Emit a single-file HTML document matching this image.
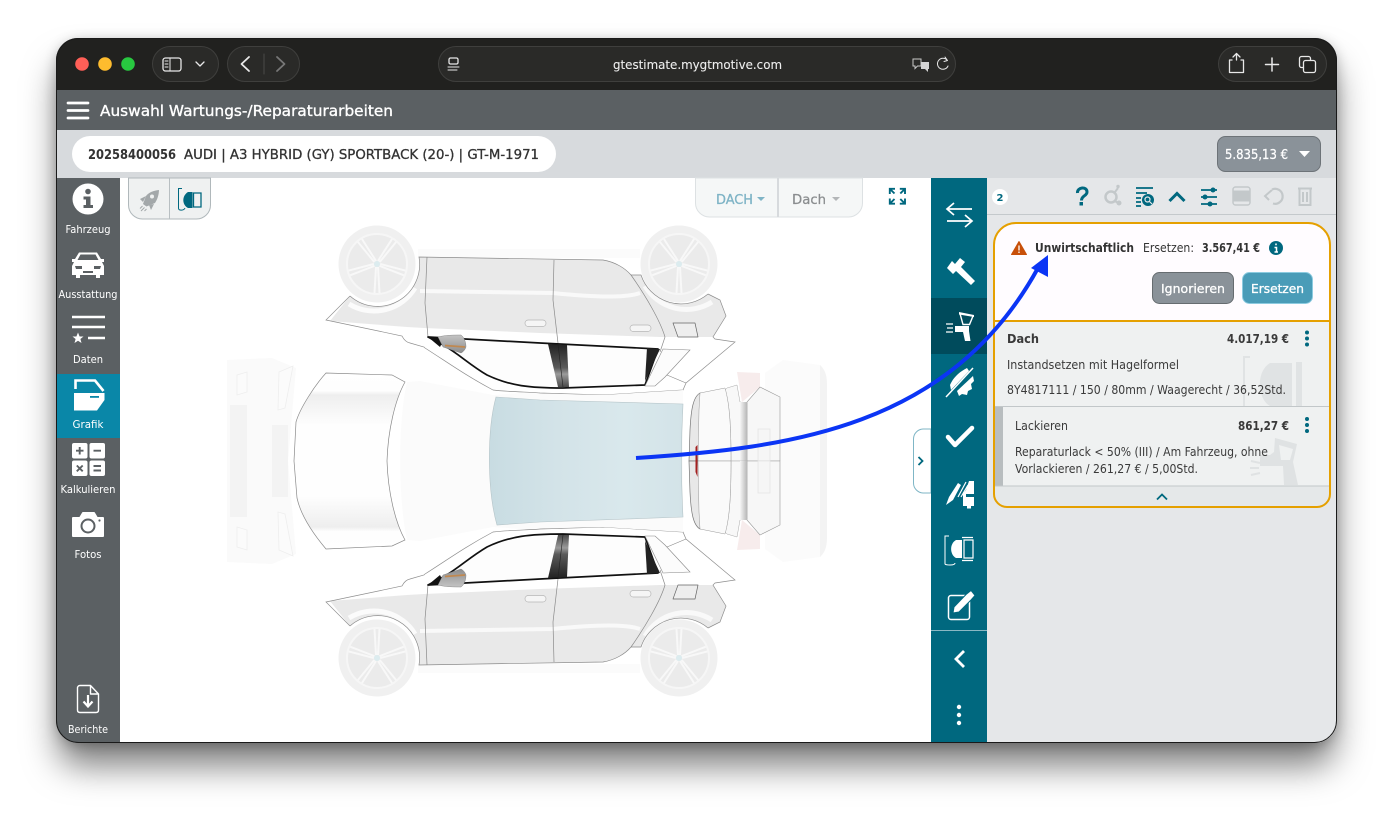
<!DOCTYPE html>
<html lang="de"><head><meta charset="utf-8"><title>Auswahl Wartungs-/Reparaturarbeiten</title>
<style>
html,body{margin:0;padding:0;width:1393px;height:817px;overflow:hidden;background:#fff}
#sh{position:absolute;left:58px;top:40px;width:1277px;height:702px;border-radius:22px;box-shadow:0 24px 34px rgba(0,0,0,.5),0 2px 14px rgba(0,0,0,.3)}
svg{position:absolute;left:0;top:0;display:block}
text{font-family:"DejaVu Sans","Liberation Sans",sans-serif}
</style></head><body>
<div id="sh"></div>
<svg width="1393" height="817" viewBox="0 0 1393 817" xmlns="http://www.w3.org/2000/svg">
<defs>
<clipPath id="win"><rect x="56" y="38" width="1281" height="705" rx="22"/></clipPath>
<linearGradient id="glass" x1="0" x2="1" y1="0" y2="0"><stop offset="0" stop-color="#c8dce2"/><stop offset=".35" stop-color="#d3e3e8"/><stop offset=".7" stop-color="#d9e8ec"/><stop offset="1" stop-color="#d3e3e8"/></linearGradient>
<linearGradient id="hoodT" x1="0" x2="0" y1="0" y2="1"><stop offset="0" stop-color="#fff"/><stop offset=".1" stop-color="#fefefe"/><stop offset=".125" stop-color="#eeeeee"/><stop offset=".3" stop-color="#fefefe"/><stop offset=".7" stop-color="#fefefe"/><stop offset=".875" stop-color="#eeeeee"/><stop offset=".9" stop-color="#fefefe"/><stop offset="1" stop-color="#fff"/></linearGradient>
<linearGradient id="pil" x1="0" x2="0" y1="0" y2="1"><stop offset="0" stop-color="#222"/><stop offset=".55" stop-color="#5a5a5a"/><stop offset=".7" stop-color="#9a9a9a"/><stop offset="1" stop-color="#4a4a4a"/></linearGradient>
<linearGradient id="mir" x1="0" x2="0" y1="0" y2="1"><stop offset="0" stop-color="#c4c4c4"/><stop offset="1" stop-color="#8c8c8c"/></linearGradient>
<linearGradient id="ctr" x1="0" x2="1" y1="0" y2="0"><stop offset="0" stop-color="#f6f6f6"/><stop offset="1" stop-color="#b8b8b8"/></linearGradient>
<g id="wheel">
<circle r="38.500" fill="#f0f0f0"/><circle r="30" fill="#ebebeb" stroke="#f6f6f6" stroke-width="2"/>
<g id="spk" fill="none" stroke="#f8f8f8" stroke-width="2"><path d="M-1,3L-2.500,29M1,3L2.500,29"/></g>
<use href="#spk" transform="rotate(72)"/><use href="#spk" transform="rotate(144)"/><use href="#spk" transform="rotate(216)"/><use href="#spk" transform="rotate(288)"/>
<circle r="3" fill="#dcecef"/>
</g>
<g id="side">
<rect x="418" y="249" width="222" height="9" fill="#fbfbfb"/>
<path d="M350,296A42,42 0 0 0 419,257L603,260C615,262 625,268 631,275L641,275A42,42 0 0 0 708,294L720,300L726,316L713,337L660,337L540,333L424,328L407,327L330,321Z" fill="#e9e9e9"/>
<path d="M349,304A48,48 0 0 0 415,288" fill="none" stroke="#fbfbfb" stroke-width="5"/>
<path d="M645,286A48,48 0 0 0 712,302" fill="none" stroke="#f9f9f9" stroke-width="5"/>
<path d="M420,291L553,293Q620,300 640,293" fill="none" stroke="#f9f9f9" stroke-width="4"/>
<path d="M350,296L326,320L402,336Q405,342 410,343L424,347L425,348C450,364 465,375 493,390C510,392 530,392 540,393L603,395L683,390L686,383L735,342L715,339L713,337L726,316L720,300L708,294" fill="none" stroke="#8e8e8e" stroke-width=".7"/>
<path d="M350,296A42,42 0 0 0 419,257L603,260C615,262 625,268 631,275C645,295 660,320 665,337L660,352" fill="none" stroke="#8a8a8a" stroke-width=".7"/>
<path d="M631,275H641A42,42 0 0 0 708,294" fill="none" stroke="#8a8a8a" stroke-width=".7"/>
<path d="M427,257L425,303L428,337M554,260L553,300L558,343" fill="none" stroke="#8a8a8a" stroke-width=".7"/>
<path d="M428,337L540,343L658,349L645,385L563,388C530,388 510,386 487,375C470,365 460,355 445,346Z" fill="#fdfdfd" stroke="#111" stroke-width="1.700" stroke-linejoin="round"/>
<path d="M428,337H445L440,347Z" fill="#111"/>
<path d="M548,344L558,387H569L567,345Z" fill="url(#pil)"/><path d="M558,344L563,387" stroke="#222" stroke-width=".6"/>
<path d="M647,348L660,349L645,381Z" fill="#222"/>
<path d="M663,349L690,350L665,377L655,386L645,386Z" fill="#fcfcfc" stroke="#888" stroke-width=".6"/>
<path d="M667,375L686,383" stroke="#888" stroke-width=".6"/>
<path d="M673,323H695L698,337H678Z" fill="#eee" stroke="#666" stroke-width=".7" stroke-linejoin="round"/>
<path d="M438,337C445,335 455,335 461,335C464,337 466,342 466,347C465,350 463,352 461,353L443,347Z" fill="url(#mir)" stroke="#777" stroke-width=".4"/>
<path d="M445,345.500L465,347" stroke="#c08850" stroke-width="1.700"/>
<rect x="525" y="320" width="21" height="6.500" rx="3.200" fill="#f5f5f5" stroke="#b5b5b5" stroke-width=".7"/>
<rect x="630" y="325" width="21" height="6.500" rx="3.200" fill="#f5f5f5" stroke="#b5b5b5" stroke-width=".7"/>
</g>
<g id="halfC">
<path d="M227,360L272,358L296,368L288,461H227Z" fill="#fafafa"/>
<path d="M230,405H247V461H230ZM272,425H288V461H272Z" fill="#f3f3f3"/>
<path d="M237,375L247,372V392L237,395ZM279,372L293,366L285,408L278,410Z" fill="#fbfbfb" stroke="#eee" stroke-width=".8"/>
<path d="M783,360L820,365C825,370 827,375 827,385V461H765V373Z" fill="#fbfbfb"/>
<path d="M820,365C825,370 827,375 827,385V461H820Z" fill="#f3f3f3"/>
<path d="M737,372L760,373V387L742,402Z" fill="#f7ecec"/>
<path d="M760,387L780,397V461H747V402Z" fill="#f7f7f7" stroke="#999" stroke-width=".6"/>
<path d="M727,388L737,385L740,402L747,403V461H731C731,430 730,405 725,390Z" fill="#f8f8f8" stroke="#aaa" stroke-width=".5"/>
<rect x="740" y="402" width="7" height="59" fill="url(#ctr)"/>
<path d="M758,429H770V461H758Z" fill="#f6f6f6" stroke="#e4e4e4" stroke-width=".8"/>
<path d="M700,393C693,397 691,410 690,430L689,461H698L700,420Z" fill="#e8e8e8" stroke="#777" stroke-width=".7"/>
<path d="M700,393L725,388C730,405 731,430 731,461H698L699,410Z" fill="#fafafa" stroke="#999" stroke-width=".5"/>
</g>
</defs>
<g clip-path="url(#win)">
<rect x="56" y="38" width="1281" height="705" fill="#fff"/>
<rect x="56" y="38" width="1281" height="52" fill="#21211f"/>
<rect x="56" y="90" width="1281" height="40" fill="#5b6063"/>
<rect x="56" y="130" width="1281" height="48" fill="#d7dadd"/>
<rect x="56" y="178" width="64" height="565" fill="#5b6063"/>
<rect x="56" y="374" width="64" height="64" fill="#0a87a8"/>
<rect x="987" y="178" width="350" height="565" fill="#e5e7e9"/>

<!-- car -->
<use href="#wheel" transform="translate(377,264)"/><use href="#wheel" transform="translate(679,264)"/>
<use href="#wheel" transform="translate(377,658) rotate(180)"/><use href="#wheel" transform="translate(679,658) rotate(180)"/>
<use href="#side"/><use href="#side" transform="translate(0,922) scale(1,-1)"/>
<use href="#halfC"/><use href="#halfC" transform="translate(0,922) scale(1,-1)"/>
<path d="M407,382L420,381L493,395L520,393L603,395L683,390L683,532L603,527L520,529L493,527L420,541L407,540C398,500 398,420 407,382Z" fill="#fbfbfb"/>
<path d="M326,373L392,375L405,382C395,400 388,430 387,461C388,492 395,522 405,540L392,546L326,549C310,530 300,512 297,498L294,461L296,422C300,408 315,385 326,373Z" fill="url(#hoodT)" stroke="#8a8a8a" stroke-width=".7"/>
<path d="M496,397L540,400L683,404C681,440 681,480 683,517L540,522L497,525C487,490 487,430 496,397Z" fill="url(#glass)" stroke="#b5c4c8" stroke-width=".6"/>
<path d="M695.500,447L697.500,445V477L695.500,472Z" fill="#a32020"/>

<!-- toolbar pills -->
<g fill="#2a2a28" stroke="#3f3f3d">
<rect x="152.500" y="46.500" width="66" height="35" rx="17.500"/>
<rect x="227.500" y="46.500" width="72" height="35" rx="17.500"/>
<rect x="438.500" y="46.500" width="517" height="35" rx="17.500"/>
<rect x="1218.500" y="46.500" width="108" height="35" rx="17.500"/>
</g>
<circle cx="82" cy="64" r="6.800" fill="#ff5f57"/><circle cx="105" cy="64" r="6.800" fill="#febc2e"/><circle cx="128" cy="64" r="6.800" fill="#28c840"/>
<g fill="none" stroke="#e8e8e8" stroke-width="1.300" stroke-linecap="round" stroke-linejoin="round">
<rect x="163" y="58" width="18" height="13" rx="2.500"/><path d="M170,58V71M165,61H168M165,64H168M165,67H168" stroke-width="1"/>
<path d="M196,62L200,66L204,62"/>
<path d="M249,57L241.500,64L249,71" stroke-width="1.800"/>
<path d="M277,57L284.500,64L277,71" stroke="#777" stroke-width="1.800"/>
<path d="M264,54V74" stroke="#4a4a48" stroke-width="1"/>
<rect x="449" y="58" width="9" height="6" rx="1.500"/><path d="M448,67H459M448,70H457" stroke-width="1"/>
<path d="M947,60A5.500,5.500 0 1 0 948,66M945,57L947.500,60.500L944,61.500" stroke-width="1"/>
<path d="M1236.500,60V54M1233,57L1236.500,53.500L1240,57M1232,60H1229.500V72.500H1243.500V60H1241"/>
<path d="M1272,58V71M1265.500,64.500H1278.500" stroke-width="1.500"/>
<rect x="1299.500" y="56.500" width="11" height="11" rx="2"/><rect x="1303.500" y="60.500" width="12" height="12" rx="2" fill="#21211f"/>
</g>
<path d="M913,59H921V66H917.500L915,68.500V66H913Z" fill="none" stroke="#c9c9c9" stroke-width="1"/>
<path d="M921,62H929V69H928V72L925,69H921Z" fill="#d5d5d5"/>
<text x="613" y="69" font-size="12" fill="#eee" stroke="#eee" stroke-width=".1" textLength="169" lengthAdjust="spacingAndGlyphs">gtestimate.mygtmotive.com</text>

<!-- header -->
<path d="M68,103H88M68,110.500H88M68,118H88" stroke="#fff" stroke-width="2.700" stroke-linecap="round"/>
<text x="100" y="116" font-size="15.500" fill="#fff" stroke="#fff" stroke-width=".35" textLength="293" lengthAdjust="spacingAndGlyphs">Auswahl Wartungs-/Reparaturarbeiten</text>
<rect x="72" y="136" width="484" height="36" rx="18" fill="#fff"/>
<text x="88" y="159" font-size="13" font-weight="700" fill="#333" textLength="88" lengthAdjust="spacingAndGlyphs">20258400056</text>
<text x="184" y="159" font-size="13" fill="#333" stroke="#333" stroke-width=".3" textLength="355" lengthAdjust="spacingAndGlyphs">AUDI | A3 HYBRID (GY) SPORTBACK (20-) | GT-M-1971</text>
<rect x="1217.500" y="136.500" width="103" height="35" rx="8" fill="#8a9299" stroke="#6d7378"/>
<text x="1225" y="159" font-size="13" fill="#fff" stroke="#fff" stroke-width=".25" textLength="63" lengthAdjust="spacingAndGlyphs">5.835,13 €</text>
<path d="M1299,151H1310L1304.500,157Z" fill="#fff"/>

<!-- sidebar -->
<circle cx="88" cy="199" r="15.500" fill="#fff"/>
<circle cx="88" cy="191.500" r="2.800" fill="#5b6063"/><path d="M83.500,196.500H90.500V205H93V208H83.500V205H86V199.500H83.500Z" fill="#5b6063"/>
<path d="M75,259L79,252.500H97L101,259H104V262H102L104,266V275H100V278H96V275H80V278H76V275H72V266L74,262H72V259Z" fill="#fff"/>
<path d="M77.500,260L80.500,254.500H95.500L98.500,260Z" fill="#5b6063"/><path d="M75,266H82V269H76ZM101,266H94V269H100ZM83,271H93V273H83Z" fill="#5b6063"/>
<path d="M72,317H105M72,327H105M88,338H105" stroke="#fff" stroke-width="2.500"/>
<path d="M78,332.500L79.600,336.500H83.500L80.400,339L81.500,343L78,340.700L74.500,343L75.600,339L72.500,336.500H76.400Z" fill="#fff"/>
<path d="M75.500,389V380.500H95L103.500,391" fill="none" stroke="#fff" stroke-width="2.600"/>
<path d="M74,393H104.500V400L97,410.500H74Z" fill="#fff"/>
<rect x="90" y="396" width="9" height="1.800" fill="#0a87a8"/>
<g fill="#fff"><rect x="72" y="443" width="15.500" height="15.500" rx="2"/><rect x="89.500" y="443" width="15.500" height="15.500" rx="2"/><rect x="72" y="460.500" width="15.500" height="15.500" rx="2"/><rect x="89.500" y="460.500" width="15.500" height="15.500" rx="2"/></g>
<path d="M76,450.700H83.500M79.700,447V454.500M93.500,450.700H101M76.800,465.500L82.700,471.300M82.700,465.500L76.800,471.300M93.500,466H101M93.500,470.500H101" stroke="#5b6063" stroke-width="1.900"/>
<path d="M73,518H80L83,513H94L97,518H103V536H73Z" fill="#fff" stroke="#fff" stroke-width="2" stroke-linejoin="round"/>
<circle cx="88" cy="526" r="6.500" fill="#fff" stroke="#5b6063" stroke-width="2"/><circle cx="99.500" cy="520.500" r="1.100" fill="#5b6063"/>
<path d="M80,685.500H90.500L98.500,694V710C98.500,712 97.500,712.500 96,712.500H80C78.500,712.500 77.500,712 77.500,710V688C77.500,686.500 78.500,685.500 80,685.500ZM90.500,685.500V694H98.500" fill="none" stroke="#fff" stroke-width="1.400" stroke-linejoin="round"/>
<path d="M88,695V706M83.500,701.500L88,706.500L92.500,701.500" fill="none" stroke="#fff" stroke-width="2.200"/>
<g font-size="11" fill="#fff" text-anchor="middle">
<text x="88" y="233" textLength="45" lengthAdjust="spacingAndGlyphs">Fahrzeug</text>
<text x="88" y="298" textLength="59" lengthAdjust="spacingAndGlyphs">Ausstattung</text>
<text x="88" y="363" textLength="30" lengthAdjust="spacingAndGlyphs">Daten</text>
<text x="88" y="428" textLength="31" lengthAdjust="spacingAndGlyphs">Grafik</text>
<text x="88" y="493" textLength="55" lengthAdjust="spacingAndGlyphs">Kalkulieren</text>
<text x="88" y="558" textLength="27" lengthAdjust="spacingAndGlyphs">Fotos</text>
<text x="88" y="733" textLength="40" lengthAdjust="spacingAndGlyphs">Berichte</text>
</g>

<!-- tool group -->
<path d="M128.500,178V205A14,14 0 0 0 142.500,219H196.500A14,14 0 0 0 210.500,205V178Z" fill="#eff1f1" stroke="#b0b8bb"/>
<path d="M169.500,178V219" stroke="#b8bfc2"/>
<path d="M159,190C154,190.500 149,192 146,196L143,204L146.500,206.500L155,203C157.500,199 158.800,195 159,190Z" fill="#a3a8aa"/>
<path d="M146,196L140,199L143,202ZM149,205L151,210L154,204Z" fill="#a3a8aa"/>
<circle cx="152" cy="196.500" r="2" fill="#eff1f1"/>
<path d="M142.500,206L140,208.500M144.500,207.500L141,211M146.500,209L144.500,211" stroke="#a3a8aa" stroke-width="1"/>
<path d="M182,188.500H178.500V208.500M178.500,208.500C179,211 184,210.500 185,208" fill="none" stroke="#00687f" stroke-width="1"/>
<path d="M188,192H192.500V208H188C182,205 181.500,196 188,192Z" fill="#00687f"/>
<path d="M193.500,193H201V207H193.500Z" fill="none" stroke="#00687f" stroke-width="1.300"/>
<path d="M695.500,178V203A14,14 0 0 0 709.500,217H848.500A14,14 0 0 0 862.500,203V178Z" fill="#f5f7f7" stroke="#dde1e3"/>
<path d="M778,178V217" stroke="#d7dadd" stroke-width="2"/>
<text x="716" y="204" font-size="13.500" fill="#7fb4c6" stroke="#7fb4c6" stroke-width=".3" textLength="37" lengthAdjust="spacingAndGlyphs">DACH</text>
<path d="M757,197H765L761,201Z" fill="#7fb4c6"/>
<text x="792" y="204" font-size="13.500" fill="#8a8d8f" stroke="#8a8d8f" stroke-width=".25" textLength="34" lengthAdjust="spacingAndGlyphs">Dach</text>
<path d="M832,197H840L836,201Z" fill="#b3b6b8"/>
<g fill="none" stroke="#00687f" stroke-width="1.900"><path d="M889.800,194V188.800H895M889.800,188.800L894.500,193.500M905,194V188.800H899.800M905,188.800L900.300,193.500M889.800,198.500V203.700H895M889.800,203.700L894.500,199M905,198.500V203.700H899.800M905,203.700L900.300,199"/></g>
<path d="M931,429H923A10,10 0 0 0 913.500,439V483A10,10 0 0 0 923,493H931Z" fill="#fff" stroke="#7fb6c6"/>
<path d="M918.500,457L922.500,461L918.500,465" fill="none" stroke="#00687f" stroke-width="1.800"/>

<!-- teal column -->
<rect x="931" y="178" width="56" height="565" fill="#00687f"/>
<rect x="931" y="298" width="56" height="56" fill="#004b5c"/>
<rect x="931" y="630" width="56" height="1" fill="#8ab8c4"/>
<g fill="none" stroke="#fff" stroke-width="1.700">
<path d="M972,209H948M954,203L947,209L954,215M947,221H971M965,215L972,221L965,227"/>
</g>
<path d="M947,268L952,261L955,264L960,258L965,262L961,267L975,281L971,285L956,271L953,274Z" fill="#fff"/>
<path d="M960,313.500L973,316L969.500,324.500H963Z" fill="none" stroke="#fff" stroke-width="1.400"/>
<path d="M959,312L974,315V317L959,314.500Z" fill="#fff"/>
<path d="M955,326H969V331L970.500,341H965L963,332H955Z" fill="#fff"/>
<path d="M946,324H953M947,328H953M946,332H953" stroke="#fff" stroke-width="1.200"/>
<path d="M946,397L973,368" stroke="#fff" stroke-width="1.500"/>
<path d="M950,385C953,378 959,372 967,368L969,371L951,390ZM957,391L973,376L974,381L971,384L972,389L968,391L967,395L962,394L959,396Z" fill="#fff"/>
<path d="M948,437L955,445L972,428" fill="none" stroke="#fff" stroke-width="4.500" stroke-linecap="round" stroke-linejoin="round"/>
<path d="M946,505L949,497L958,483L961,485L953,500Z" fill="#fff"/>
<path d="M958,497L966,482M961,497L968,485" stroke="#fff" stroke-width="1.200"/>
<path d="M969,481H974V506H971V508.500H967V506H963V494L966,490Z" fill="#fff"/>
<path d="M966,494H974V497H966Z" fill="#00687f"/>
<path d="M949,536H945V564C945,565 955,566 955,563" fill="none" stroke="#fff" stroke-width="1"/>
<path d="M956,540H962V558H956C950,555 949,544 956,540Z" fill="#fff"/>
<path d="M964,540H973V558H964ZM962,537.500H973M962,560.500H973" fill="none" stroke="#fff" stroke-width="1.200"/>
<rect x="948.500" y="595.500" width="21" height="24" rx="2.500" fill="none" stroke="#fff" stroke-width="1.500"/>
<path d="M954,607L966,594.500L971,590.500L975,595.500L971,600L959,612L953,613Z" fill="#fff" stroke="#00687f" stroke-width="1"/>
<path d="M964,651L956,659L964,667" fill="none" stroke="#fff" stroke-width="2.800"/>
<circle cx="959" cy="707" r="2.200" fill="#fff"/><circle cx="959" cy="715" r="2.200" fill="#fff"/><circle cx="959" cy="723" r="2.200" fill="#fff"/>

<!-- right toolbar -->
<rect x="987" y="214" width="350" height="1" fill="#c4c9cc"/>
<circle cx="1000" cy="197" r="8" fill="#fff"/>
<text x="1000" y="201" font-size="10" font-weight="700" fill="#00687f" text-anchor="middle">2</text>
<path d="M1077.500,193C1077,187 1087,186 1087,192C1087,196 1081.500,195.500 1081.500,200.500" fill="none" stroke="#00687f" stroke-width="3"/><rect x="1079.500" y="202" width="3.500" height="3.500" fill="#00687f"/>
<g fill="none" stroke="#c3c8ca"><circle cx="1111" cy="197" r="5.500" stroke-width="2.500"/><path d="M1115,192L1118,188M1115,201L1118,203" stroke-width="2"/></g>
<circle cx="1118" cy="186.500" r="1.700" fill="#c3c8ca"/><circle cx="1119" cy="203" r="2.500" fill="#c3c8ca"/>
<path d="M1136,188H1153M1136,193H1147M1136,198H1141M1136,202H1141M1136,206H1141" stroke="#00687f" stroke-width="1.800"/>
<circle cx="1148" cy="200" r="6" fill="#00687f"/><circle cx="1147.500" cy="199.500" r="2.500" fill="none" stroke="#e5e7e9" stroke-width="1.200"/><path d="M1149.500,201.500L1152,204" stroke="#e5e7e9" stroke-width="1.200"/>
<path d="M1169.500,201L1177,193.500L1184.500,201" fill="none" stroke="#00687f" stroke-width="3"/>
<path d="M1201,190H1217M1201,197H1217M1201,204H1217" stroke="#00687f" stroke-width="1.800"/>
<circle cx="1213" cy="190" r="2.500" fill="#00687f"/><circle cx="1205" cy="197" r="2.500" fill="#00687f"/><circle cx="1210" cy="204" r="2.500" fill="#00687f"/>
<rect x="1233" y="187" width="17" height="18" rx="2.500" fill="none" stroke="#c3c8ca" stroke-width="1.500"/><rect x="1233" y="190.500" width="17" height="11" fill="#c3c8ca"/>
<path d="M1272,189.500A7.500,7.500 0 1 1 1273,203.500" fill="none" stroke="#c3c8ca" stroke-width="2.200"/><path d="M1272,190L1265,196L1269,200" fill="none" stroke="#c3c8ca" stroke-width="2"/>
<path d="M1298,188.500H1312M1299.500,188.500V205H1310.500V188.500M1303,192V202M1307,192V202" fill="none" stroke="#c3c8ca" stroke-width="2"/>

<!-- card -->
<path d="M1016,223H1308A22,22 0 0 1 1330,245V321H994V245A22,22 0 0 1 1016,223Z" fill="#fffcff"/>
<path d="M994,321H1330V494A13,13 0 0 1 1317,507H1007A13,13 0 0 1 994,494Z" fill="#eff1f1"/>
<path d="M994,486H1330V494A13,13 0 0 1 1317,507H1007A13,13 0 0 1 994,494Z" fill="#e5e8e9"/>
<!-- watermark -->
<g fill="#e0e3e4"><path d="M1296,362H1302V406H1296Z"/><path d="M1270,363H1292V406H1270C1258,400 1255,372 1270,363Z"/><path d="M1247,356L1243,356V407H1245V358H1250V356Z"/></g>
<path d="M1275,438L1297,444L1293,462L1298,485H1284L1283,466H1260V455H1270L1274,452Z" fill="#dfe2e3"/><path d="M1251,461L1260,463M1250,468H1259M1251,475L1260,473" stroke="#dfe2e3" stroke-width="2"/>
<path d="M1279,445L1293,449L1290,460H1281Z" fill="#eff1f1"/>
<rect x="995" y="407" width="8" height="79" fill="#b8bdbf"/>
<path d="M995,321.500H1330M995,406.500H1330M995,486H1330" stroke="#c2c7c9" stroke-width="1"/>
<path d="M994,321H1330" stroke="#e5a000" stroke-width="2"/>
<path d="M1016,223H1308A22,22 0 0 1 1330,245V494A13,13 0 0 1 1317,507H1007A13,13 0 0 1 994,494V245A22,22 0 0 1 1016,223Z" fill="none" stroke="#e5a000" stroke-width="2"/>
<path d="M1019,241.500L1026.500,254.500H1011.500Z" fill="#c8500a" stroke="#c8500a" stroke-linejoin="round"/><path d="M1019,245.500V250.500M1019,251.500V253" stroke="#fff" stroke-width="1.300"/>
<text x="1035" y="252" font-size="12" font-weight="700" fill="#333" textLength="99" lengthAdjust="spacingAndGlyphs">Unwirtschaftlich</text>
<text x="1143" y="252" font-size="12" fill="#333" textLength="51" lengthAdjust="spacingAndGlyphs">Ersetzen:</text>
<text x="1202" y="252" font-size="12" font-weight="700" fill="#333" textLength="58" lengthAdjust="spacingAndGlyphs">3.567,41 €</text>
<circle cx="1276" cy="248" r="7" fill="#00687f"/><path d="M1276,243.500V245.200M1274.500,247.500H1276.500V252M1274.500,252H1278" stroke="#fff" stroke-width="1.500" fill="none"/>
<rect x="1152.500" y="272.500" width="81" height="31" rx="7" fill="#8a9299" stroke="#666c70"/>
<rect x="1242.500" y="272.500" width="70" height="31" rx="7" fill="#4a9cb8" stroke="#8ccbe0"/>
<text x="1161" y="293" font-size="12.500" fill="#fff" stroke="#fff" stroke-width=".3" textLength="64" lengthAdjust="spacingAndGlyphs">Ignorieren</text>
<text x="1251" y="293" font-size="12.500" fill="#fff" stroke="#fff" stroke-width=".3" textLength="53" lengthAdjust="spacingAndGlyphs">Ersetzen</text>
<g font-size="12" fill="#3a3a3a">
<text x="1007" y="343" font-weight="700" font-size="12.500" textLength="32" lengthAdjust="spacingAndGlyphs">Dach</text>
<text x="1227" y="343" font-weight="700" textLength="62" lengthAdjust="spacingAndGlyphs">4.017,19 €</text>
<text x="1007" y="369" textLength="172" lengthAdjust="spacingAndGlyphs">Instandsetzen mit Hagelformel</text>
<text x="1007" y="394" textLength="279" lengthAdjust="spacingAndGlyphs">8Y4817111 / 150 / 80mm / Waagerecht / 36,52Std.</text>
<text x="1015" y="430" textLength="53" lengthAdjust="spacingAndGlyphs">Lackieren</text>
<text x="1238" y="430" font-weight="700" textLength="51" lengthAdjust="spacingAndGlyphs">861,27 €</text>
<text x="1015" y="456" textLength="253" lengthAdjust="spacingAndGlyphs">Reparaturlack &lt; 50% (III) / Am Fahrzeug, ohne</text>
<text x="1015" y="473" textLength="183" lengthAdjust="spacingAndGlyphs">Vorlackieren / 261,27 € / 5,00Std.</text>
</g>
<g fill="#00687f"><circle cx="1307" cy="332.500" r="2"/><circle cx="1307" cy="338.500" r="2"/><circle cx="1307" cy="344.500" r="2"/><circle cx="1307" cy="419" r="2"/><circle cx="1307" cy="425" r="2"/><circle cx="1307" cy="431" r="2"/></g>
<path d="M1157,499.500L1162,494.500L1167,499.500" fill="none" stroke="#00687f" stroke-width="1.800"/>

<!-- arrow -->
<path d="M636,458C790,448 950,428 1038,268" fill="none" stroke="#0b35f5" stroke-width="4"/>
<path d="M1048,255L1031,268L1048,277Z" fill="#0b35f5"/>
</g>
<rect x="56.500" y="38.500" width="1280" height="704" rx="22" fill="none" stroke="#1a1a1a"/>
</svg>
</body></html>
